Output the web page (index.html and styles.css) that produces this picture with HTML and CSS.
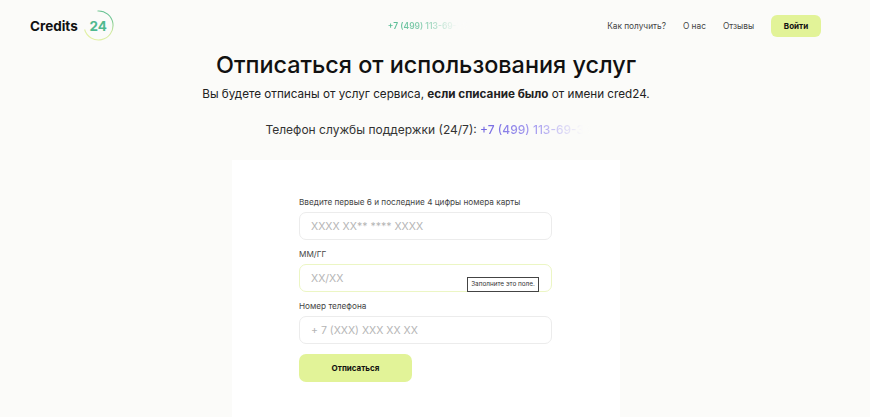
FILE: index.html
```html
<!DOCTYPE html>
<html lang="ru">
<head>
    <meta charset="UTF-8">
    <meta name="viewport" content="width=device-width, initial-scale=1.0">
    <title>Credits 24</title>
    <link rel="stylesheet" href="styles.css">
</head>
<body>

    <header class="header">
        <a class="logo" href="#">
            <span class="logo-text">Credits</span>
            <span class="logo-badge">
                <svg class="logo-ring" width="31" height="31" viewBox="0 0 31 31">
                    <defs>
                        <linearGradient id="ring" x1="0.8" y1="0" x2="0.2" y2="1">
                            <stop offset="0" stop-color="#4fb98f"/>
                            <stop offset="0.45" stop-color="#cfe9a0"/>
                            <stop offset="1" stop-color="#e6f2a6"/>
                        </linearGradient>
                    </defs>
                    <path d="M14.5 1 A14.5 14.5 0 1 1 1.6 19.5" fill="none" stroke="url(#ring)" stroke-width="1.1"/>
                </svg>
                <span class="logo-num">24</span>
            </span>
        </a>
        <a class="header-phone" href="#">+7 (499) 113-69-38</a>
        <nav class="nav">
            <a href="#">Как получить?</a>
            <a href="#">О нас</a>
            <a href="#">Отзывы</a>
            <button class="btn btn-login">Войти</button>
        </nav>
    </header>

    <main class="main">
        <h1>Отписаться от использования услуг</h1>
        <p class="lead">Вы будете отписаны от услуг сервиса, <b>если списание было</b> от имени cred24.</p>
        <p class="support">Телефон службы поддержки (24/7): <a class="support-phone" href="#">+7 (499) 113-69-38</a></p>

        <section class="card">
            <form class="form">
                <div class="field">
                    <label>Введите первые 6 и последние 4 цифры номера карты</label>
                    <input type="text" placeholder="XXXX XX** **** XXXX">
                </div>
                <div class="field">
                    <label>ММ/ГГ</label>
                    <input class="invalid" type="text" placeholder="XX/XX">
                    <span class="tooltip">Заполните это поле.</span>
                </div>
                <div class="field">
                    <label>Номер телефона</label>
                    <input type="text" placeholder="+ 7 (XXX) XXX XX XX">
                </div>
                <button class="btn btn-submit" type="button">Отписаться</button>
            </form>
        </section>
    </main>

</body>
</html>
```

FILE: styles.css
```css
/* Page */
* {
    box-sizing: border-box;
}

body {
    margin: 0;
    padding: 0;
    background: #fbfbf9;
    color: #111;
    font-family: Inter, "Noto Sans", sans-serif;
}

a {
    color: inherit;
    text-decoration: none;
}

/* Header */
.header {
    display: flex;
    align-items: center;
    height: 51px;
    padding: 0 49px 0 30px;
}

.logo {
    display: flex;
    align-items: center;
    gap: 5px;
}

.logo-text {
    font-size: 13.5px;
    font-weight: 700;
}

.logo-badge {
    position: relative;
    display: flex;
    align-items: center;
    justify-content: center;
    width: 31px;
    height: 31px;
}

.logo-ring {
    position: absolute;
    inset: 0;
}

.logo-num {
    color: #4fb98f;
    font-size: 13.5px;
    font-weight: 700;
}

.header-phone {
    margin-left: 274px;
    white-space: nowrap;
    font-size: 8.5px;
    font-weight: 600;
    color: transparent;
    background: linear-gradient(90deg, #4fb98f 0%, #8fd0b4 45%, #fbfbf9 88%);
    -webkit-background-clip: text;
    background-clip: text;
}

.nav {
    display: flex;
    align-items: center;
    gap: 17px;
    margin-left: auto;
    font-size: 8.3px;
    color: #444;
}

.btn {
    border: 0;
    font-family: inherit;
    font-weight: 700;
    color: #111;
    background: #e2f398;
}

.btn-login {
    width: 50px;
    height: 22px;
    border-radius: 6px;
    font-size: 8px;
}

/* Main */
.main {
    display: flex;
    flex-direction: column;
    align-items: center;
    padding-right: 18px;
}

h1 {
    margin: 0;
    font-size: 23.4px;
    line-height: 28px;
    font-weight: 500;
}

.lead {
    margin: 5px 0 0;
    font-size: 11.7px;
    line-height: 20px;
    color: #222;
}

.support {
    margin: 16px 0 0;
    padding-left: 5px;
    font-size: 12px;
    line-height: 20px;
    color: #333;
    white-space: nowrap;
}

.support-phone {
    color: transparent;
    font-weight: 500;
    background: linear-gradient(90deg, #6f63e0 0%, #a9a0f0 50%, #fbfbf9 92%);
    -webkit-background-clip: text;
    background-clip: text;
}

/* Card */
.card {
    width: 388px;
    height: 257px;
    margin-top: 20px;
    padding: 37px 68px 0 67px;
    background: #fff;
}

.form {
    display: flex;
    flex-direction: column;
    gap: 9px;
}

.field {
    position: relative;
    display: flex;
    flex-direction: column;
    gap: 4px;
}

.field label {
    font-size: 8.2px;
    line-height: 11px;
    color: #444;
}

.field input {
    width: 253px;
    height: 28px;
    padding: 0 11px;
    border: 1px solid #ececec;
    border-radius: 7px;
    outline: 0;
    background: #fff;
    font-family: inherit;
    font-size: 10.5px;
}

.field input::placeholder {
    color: #b5b5b5;
}

.field input.invalid {
    border-color: #ecf6c4;
}

.tooltip {
    position: absolute;
    left: 168px;
    top: 28px;
    width: 72px;
    height: 15px;
    border: 1px solid #444;
    background: #fff;
    font-size: 6.4px;
    line-height: 13px;
    text-align: center;
    color: #333;
}

.btn-submit {
    width: 113px;
    height: 28px;
    margin-top: 1px;
    border-radius: 7px;
    font-size: 8px;
}
```
